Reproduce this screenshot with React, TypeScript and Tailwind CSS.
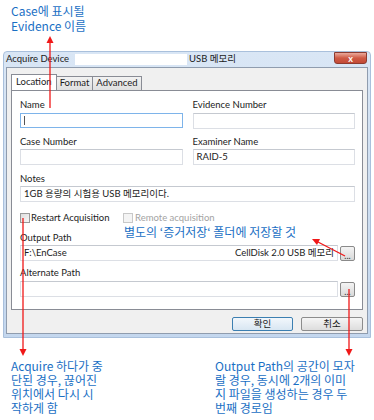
import React from 'react';

const ui = "font-['Lato','Noto_Sans_CJK_KR',sans-serif] text-[9.5px] text-[#1b1b1b]";
const note = "font-['Noto_Sans_CJK_KR',sans-serif] text-[12px] leading-[14px] text-[#1a6fc4]";

function Label({ children }: { children: React.ReactNode }) {
  return <div className="h-[12px] leading-[12px]">{children}</div>;
}

function Box({ children, focused }: { children?: React.ReactNode; focused?: boolean }) {
  return (
    <div
      className={
        focused
          ? 'h-[15px] border border-[#7eb4ea] bg-white px-[3px] flex items-center'
          : 'h-[16px] border border-[#dcdfe5] border-t-[#c5c9d0] bg-white px-[3px] flex items-center'
      }
    >
      {children}
    </div>
  );
}

function Dots() {
  return (
    <div className="w-[15px] h-[15px] border border-[#8a8a8a] rounded-[2px] bg-gradient-to-b from-[#f4f4f4] to-[#d9d9d9] flex items-end justify-center leading-[9px] text-[9px] text-[#333]">
      ...
    </div>
  );
}

function Check({ disabled }: { disabled?: boolean }) {
  return (
    <span
      className={
        disabled
          ? 'w-[10px] h-[10px] border border-[#c8c8c8] bg-[#f4f4f4]'
          : 'w-[10px] h-[10px] border border-[#9a9a9a] bg-gradient-to-br from-[#dedede] to-[#f7f7f7]'
      }
    />
  );
}

function Arrows() {
  return (
    <svg className="absolute left-0 top-0 pointer-events-none" width="374" height="420" viewBox="0 0 374 420">
      <g stroke="#f01818" strokeWidth="1.3" fill="none">
        <line x1="50" y1="108" x2="50" y2="42" />
        <line x1="23" y1="218" x2="23" y2="350" />
        <line x1="349" y1="289" x2="349" y2="350" />
        <line x1="345" y1="256" x2="318" y2="242" />
      </g>
      <g fill="#f01818">
        <polygon points="50,36 46.5,43 53.5,43" />
        <polygon points="23,356 19.5,349 26.5,349" />
        <polygon points="349,356 345.5,349 352.5,349" />
        <polygon points="312,239 320,239 317,245" />
      </g>
    </svg>
  );
}

export default function App() {
  return (
    <div className="relative w-[374px] h-[420px] bg-white overflow-hidden">
      <div className={`${note} h-[51px] pl-[11px] pt-[3px] leading-[15px]`}>
        Case에 표시될
        <br />
        Evidence 이름
      </div>

      <div className={`${ui} ml-[3px] w-[368px] h-[287px] border border-[#a9c0dc] rounded-t-[4px] bg-gradient-to-b from-[#d9e6f5] to-[#c4d7ee]`}>
        <div className="h-[15px] flex items-center pl-[2px] relative">
          <span>Acquire Device</span>
          <span className="ml-[6px] w-[112px] h-[11px] bg-white" />
          <span className="ml-[2px]">USB 메모리</span>
          <div className="absolute right-[3px] top-0 w-[33px] h-[12px] rounded-b-[3px] border border-[#8c3b30] bg-gradient-to-b from-[#e9a99c] via-[#cf5a45] to-[#c24a36] flex items-center justify-center text-white text-[9px] font-bold leading-none">
            x
          </div>
        </div>

        <div className="mx-[2px] h-[267px] border border-[#8f9cae] bg-[#f0f0f0] flex flex-col px-[4px] pt-[6px]">
          <div className="flex items-end h-[16px]">
            <div className="h-[16px] px-[4px] border border-[#898c95] border-b-0 bg-white flex items-center">Location</div>
            <div className="h-[14px] px-[3px] border border-[#898c95] border-l-0 border-b-0 bg-gradient-to-b from-[#f2f2f2] to-[#e0e0e0] flex items-center">Format</div>
            <div className="h-[14px] px-[3px] border border-[#898c95] border-l-0 border-b-0 bg-gradient-to-b from-[#f2f2f2] to-[#e0e0e0] flex items-center">Advanced</div>
          </div>

          <div className="relative h-[220px] border border-[#898c95] bg-white pl-[8px] pr-[7px] pt-[8px]">
            <div className="grid grid-cols-2 gap-x-[10px]">
              <div>
                <Label>Name</Label>
                <div className="mt-[2px]">
                  <Box focused>
                    <span className="w-px h-[9px] bg-[#555]" />
                  </Box>
                </div>
              </div>
              <div>
                <Label>Evidence Number</Label>
                <div className="mt-[2px]">
                  <Box />
                </div>
              </div>
              <div className="mt-[7px]">
                <Label>Case Number</Label>
                <div className="mt-[1px]">
                  <Box />
                </div>
              </div>
              <div className="mt-[7px]">
                <Label>Examiner Name</Label>
                <div className="mt-[1px]">
                  <Box>RAID-5</Box>
                </div>
              </div>
            </div>

            <div className="mt-[8px]">
              <Label>Notes</Label>
              <div className="mt-[1px]">
                <Box>1GB 용량의 시험용 USB 메모리이다.</Box>
              </div>
            </div>

            <div className="mt-[10px] h-[12px] flex items-center">
              <div className="w-[103px] flex items-center gap-[1px]">
                <Check />
                <span>Restart Acquisition</span>
              </div>
              <div className="flex items-center gap-[2px] text-[#a3a3a3]">
                <Check disabled />
                <span>Remote acquisition</span>
              </div>
            </div>

            <div className={`${note} absolute left-[112px] top-[134px] leading-[11px]`}>별도의 ‘증거저장‘ 폴더에 저장할 것</div>

            <div className="mt-[8px]">
              <Label>Output Path</Label>
              <div className="mt-[1px] flex items-center gap-[2px]">
                <div className="flex-1">
                  <Box>
                    <span className="flex-1">F:\EnCase</span>
                    <span>CellDisk 2.0 USB 메모리</span>
                  </Box>
                </div>
                <Dots />
              </div>
            </div>

            <div className="mt-[6px]">
              <Label>Alternate Path</Label>
              <div className="mt-[2px] flex items-center gap-[2px]">
                <div className="flex-1">
                  <Box />
                </div>
                <Dots />
              </div>
            </div>
          </div>

          <div className="mt-[7px] flex justify-end gap-[8px]">
            <div className="w-[61px] h-[14px] border border-[#3c7fb1] rounded-[2px] bg-gradient-to-b from-[#f2f7fc] to-[#d8e6f2] flex items-center justify-center">확인</div>
            <div className="w-[62px] h-[14px] border border-[#8c8c8c] rounded-[2px] bg-gradient-to-b from-[#f5f5f5] to-[#dddddd] flex items-center justify-center">취소</div>
          </div>
        </div>
      </div>

      <div className={`${note} flex pt-[21px]`}>
        <div className="pl-[11px] w-[215px]">
          Acquire 하다가 중
          <br />
          단된 경우, 끊어진
          <br />
          위치에서 다시 시
          <br />
          작하게 함
        </div>
        <div>
          Output Path의 공간이 모자
          <br />
          랄 경우, 동시에 2개의 이미
          <br />
          지 파일을 생성하는 경우 두
          <br />
          번째 경로임
        </div>
      </div>

      <Arrows />
    </div>
  );
}
